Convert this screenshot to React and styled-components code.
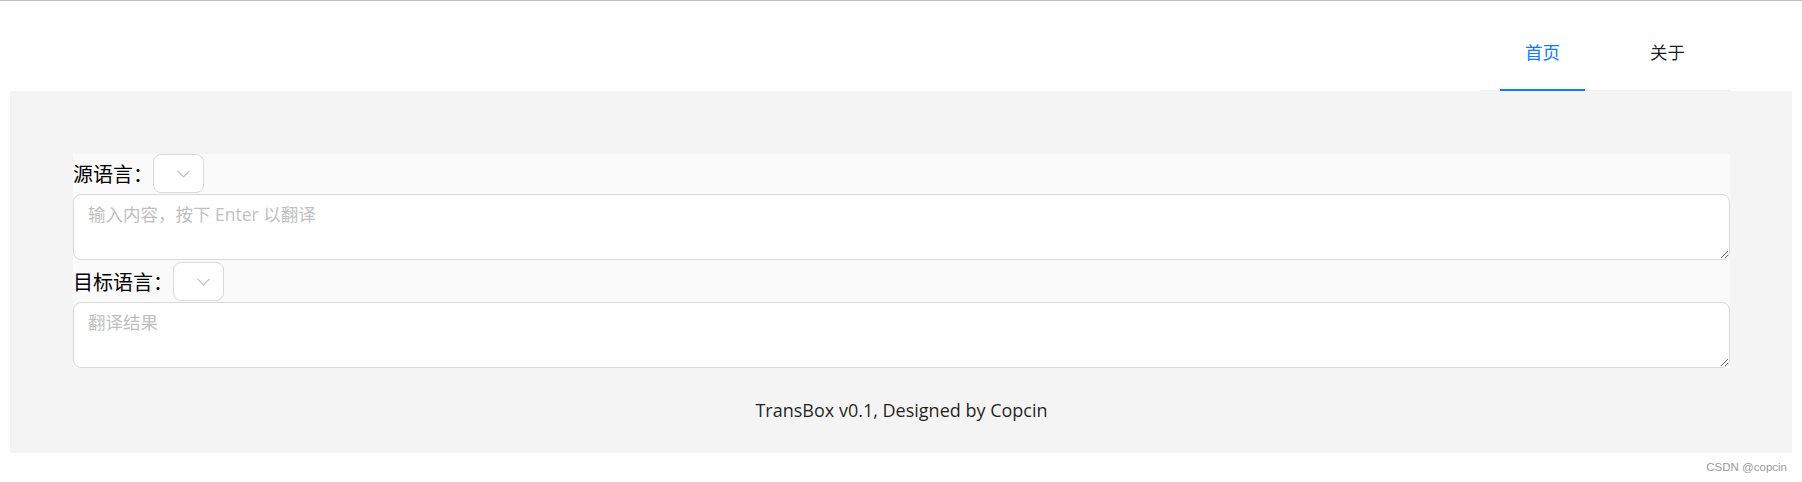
import React from "react"
import styled, { createGlobalStyle } from "styled-components"

const GlobalStyle = createGlobalStyle`
  html, body {
    margin: 0;
    padding: 0;
    background: #fff;
  }
  body {
    font-family: "Open Sans", "Noto Sans CJK SC", sans-serif;
    font-size: 17.5px;
    color: rgba(0, 0, 0, 0.88);
  }
  * {
    box-sizing: border-box;
  }
`

const Page = styled.div`
  border-top: 1px solid #bfbfbf;
  padding: 10px 10px 0;
`
const Header = styled.header`
  display: flex;
  justify-content: flex-end;
  height: 80px;
  padding: 0 62px;
  background: #fff;
`
const Menu = styled.nav`
  display: flex;
  gap: 40px;
  width: 250px;
  height: 80px;
  padding: 0 20px;
  border-bottom: 1px solid #f0f0f0;
`
const MenuItem = styled.a`
  display: flex;
  align-items: center;
  justify-content: center;
  width: 85px;
  margin-bottom: -1px;
  padding-top: 3px;
  font-family: "Noto Sans CJK SC", sans-serif;
  font-size: 17.5px;
  color: ${props => (props.$active ? "#1677ff" : "rgba(0, 0, 0, 0.88)")};
  border-bottom: 2px solid ${props => (props.$active ? "#1677ff" : "transparent")};
  cursor: pointer;
`
const Content = styled.main`
  background: #f4f4f4;
  padding: 63px 62px 0 63px;
`
const Panel = styled.section`
  background: #fafafa;
`
const Row = styled.div`
  display: flex;
  align-items: center;
  padding: ${props => props.$top || 0}px 0 1px;
`
const Label = styled.label`
  font-family: "Noto Sans CJK SC", sans-serif;
  font-size: 20px;
  line-height: 1;
  color: #000;
`
const Select = styled.div`
  display: flex;
  align-items: center;
  width: 51px;
  height: 39px;
  padding-left: 23px;
  background: #fff;
  border: 1px solid #d9d9d9;
  border-radius: 8px;
  color: #bfbfbf;
`
const TextArea = styled.textarea`
  display: block;
  width: 100%;
  height: 66px;
  padding: 6px 14px;
  font-family: "Open Sans", "Noto Sans CJK SC", sans-serif;
  font-size: 17.5px;
  line-height: 1.5715;
  background: #fff;
  border: 1px solid #d9d9d9;
  border-radius: 8px;
  resize: vertical;
  outline: none;
  &::placeholder {
    color: #bfbfbf;
  }
`
const Footer = styled.footer`
  padding: 29px 0;
  text-align: center;
  font-size: 18px;
  line-height: 27px;
  color: rgba(0, 0, 0, 0.88);
`
const Watermark = styled.div`
  padding: 8px 15px 0 0;
  text-align: right;
  font-family: "Liberation Sans", sans-serif;
  font-size: 11.5px;
  color: #999;
`

const Chevron = () => (
  <svg width="13" height="8" viewBox="0 0 13 8" fill="none">
    <path d="M0.5 0.8 L6.5 7 L12.5 0.8" stroke="currentColor" strokeWidth="1.2" />
  </svg>
)

const LanguageField = ({ label, placeholder, top }) => (
  <>
    <Row $top={top}>
      <Label>{label}</Label>
      <Select>
        <Chevron />
      </Select>
    </Row>
    <TextArea placeholder={placeholder} />
  </>
)

const App = () => (
  <>
    <GlobalStyle />
    <Page>
      <Header>
        <Menu>
          <MenuItem $active>首页</MenuItem>
          <MenuItem>关于</MenuItem>
        </Menu>
      </Header>
      <Content>
        <Panel>
          <LanguageField
            label="源语言："
            placeholder="输入内容，按下 Enter 以翻译"
            top={0}
          />
          <LanguageField label="目标语言：" placeholder="翻译结果" top={2} />
        </Panel>
        <Footer>TransBox v0.1, Designed by Copcin</Footer>
      </Content>
    </Page>
    <Watermark>CSDN @copcin</Watermark>
  </>
)

export default App
